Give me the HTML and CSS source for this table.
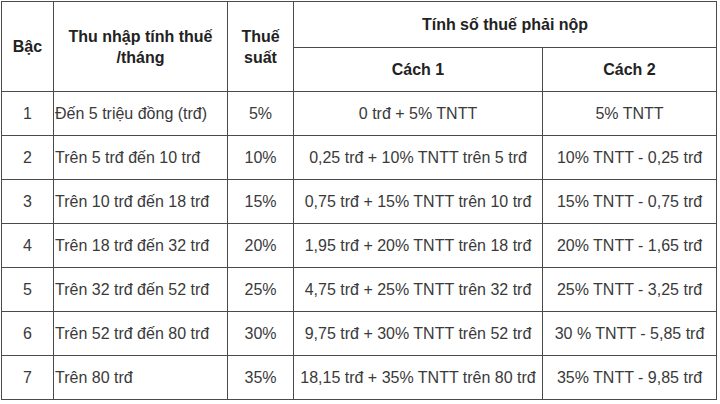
FILE: index.html
```html
<!DOCTYPE html>
<html lang="vi">
<head>
<meta charset="utf-8">
<link rel="stylesheet" href="styles.css">
</head>
<body>
<table class="tax">
  <colgroup>
    <col class="c1"><col class="c2"><col class="c3"><col class="c4"><col class="c5">
  </colgroup>
  <thead>
    <tr class="h1">
      <th rowspan="2">Bậc</th>
      <th rowspan="2">Thu nhập tính thuế<br>/tháng</th>
      <th rowspan="2">Thuế<br>suất</th>
      <th colspan="2">Tính số thuế phải nộp</th>
    </tr>
    <tr class="h2">
      <th>Cách 1</th>
      <th>Cách 2</th>
    </tr>
  </thead>
  <tbody>
    <tr><td>1</td><td class="left">Đến 5 triệu đồng (trđ)</td><td>5%</td><td>0 trđ + 5% TNTT</td><td>5% TNTT</td></tr>
    <tr><td>2</td><td class="left">Trên 5 trđ đến 10 trđ</td><td>10%</td><td>0,25 trđ + 10% TNTT trên 5 trđ</td><td>10% TNTT - 0,25 trđ</td></tr>
    <tr><td>3</td><td class="left">Trên 10 trđ đến 18 trđ</td><td>15%</td><td>0,75 trđ + 15% TNTT trên 10 trđ</td><td>15% TNTT - 0,75 trđ</td></tr>
    <tr><td>4</td><td class="left">Trên 18 trđ đến 32 trđ</td><td>20%</td><td>1,95 trđ + 20% TNTT trên 18 trđ</td><td>20% TNTT - 1,65 trđ</td></tr>
    <tr><td>5</td><td class="left">Trên 32 trđ đến 52 trđ</td><td>25%</td><td>4,75 trđ + 25% TNTT trên 32 trđ</td><td>25% TNTT - 3,25 trđ</td></tr>
    <tr><td>6</td><td class="left">Trên 52 trđ đến 80 trđ</td><td>30%</td><td>9,75 trđ + 30% TNTT trên 52 trđ</td><td>30 % TNTT - 5,85 trđ</td></tr>
    <tr><td>7</td><td class="left">Trên 80 trđ</td><td>35%</td><td>18,15 trđ + 35% TNTT trên 80 trđ</td><td>35% TNTT - 9,85 trđ</td></tr>
  </tbody>
</table>
</body>
</html>
```
FILE: styles.css
```css
html, body {
  margin: 0;
  background: #ffffff;
}
body {
  padding: 1px 0 0 1px;
  font-family: "Liberation Sans", Arial, sans-serif;
  font-size: 16px;
  color: #3a3a3a;
}
.tax {
  border-collapse: collapse;
  table-layout: fixed;
  width: 715px;
}
.c1 { width: 52px; }
.c2 { width: 174px; }
.c3 { width: 66px; }
.c4 { width: 249px; }
.c5 { width: 174px; }
.tax th,
.tax td {
  border: 1px solid #4a4a4a;
  padding: 0;
  text-align: center;
  vertical-align: middle;
  line-height: 21px;
  white-space: nowrap;
}
.tax th {
  font-weight: bold;
  color: #222222;
}
.h1 th { height: 45px; }
.h2 th { height: 43px; }
.tax td { height: 43px; }
.tax td.left {
  text-align: left;
  padding-left: 1px;
}
```
